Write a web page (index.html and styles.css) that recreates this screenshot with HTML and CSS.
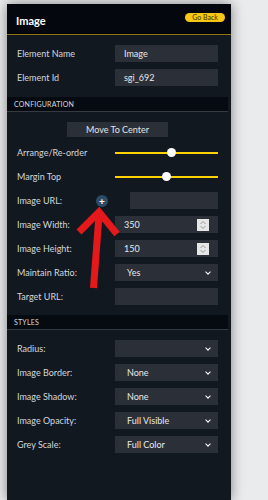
FILE: index.html
```html
<!DOCTYPE html>
<html>
<head>
    <title>Image settings</title>
    <link rel="stylesheet" href="styles.css">
</head>
<body>
    <div class="panel">
        <div class="panel-head">
            <h1>Image</h1>
            <button class="back-btn">Go Back</button>
        </div>
        <div class="panel-body">
            <div class="section">
                <div class="row">
                    <label>Element Name</label>
                    <input class="field" type="text" value="Image">
                </div>
                <div class="row">
                    <label>Element Id</label>
                    <input class="field" type="text" value="sgi_692">
                </div>
            </div>

            <div class="section-title">Configuration</div>
            <div class="section">
                <button class="center-btn">Move To Center</button>
                <div class="row">
                    <label>Arrange/Re-order</label>
                    <input class="slider" type="range" min="0" max="100" value="55">
                </div>
                <div class="row">
                    <label>Margin Top</label>
                    <input class="slider" type="range" min="0" max="100" value="50">
                </div>
                <div class="row">
                    <label>Image URL:</label>
                    <span class="add-btn">+</span>
                    <input class="field field-url" type="text" value="">
                </div>
                <div class="row">
                    <label>Image Width:</label>
                    <div class="field number">
                        <input type="text" value="350">
                        <span class="spin">
                            <svg width="8" height="10" viewBox="0 0 8 10"><path d="M1.5 4 L4 1.5 L6.5 4 M1.5 6 L4 8.5 L6.5 6" fill="none" stroke="#9a9a9a" stroke-width="1"/></svg>
                        </span>
                    </div>
                </div>
                <div class="row">
                    <label>Image Height:</label>
                    <div class="field number">
                        <input type="text" value="150">
                        <span class="spin">
                            <svg width="8" height="10" viewBox="0 0 8 10"><path d="M1.5 4 L4 1.5 L6.5 4 M1.5 6 L4 8.5 L6.5 6" fill="none" stroke="#9a9a9a" stroke-width="1"/></svg>
                        </span>
                    </div>
                </div>
                <div class="row">
                    <label>Maintain Ratio:</label>
                    <div class="field select"><span>Yes</span></div>
                </div>
                <div class="row">
                    <label>Target URL:</label>
                    <input class="field" type="text" value="">
                </div>
            </div>

            <div class="section-title">Styles</div>
            <div class="section">
                <div class="row">
                    <label>Radius:</label>
                    <div class="field select"><span></span></div>
                </div>
                <div class="row">
                    <label>Image Border:</label>
                    <div class="field select"><span>None</span></div>
                </div>
                <div class="row">
                    <label>Image Shadow:</label>
                    <div class="field select"><span>None</span></div>
                </div>
                <div class="row">
                    <label>Image Opacity:</label>
                    <div class="field select"><span>Full Visible</span></div>
                </div>
                <div class="row">
                    <label>Grey Scale:</label>
                    <div class="field select"><span>Full Color</span></div>
                </div>
            </div>
        </div>
    </div>

    <!-- red annotation arrow drawn over the panel -->
    <svg class="arrow" width="50" height="90" viewBox="0 0 50 90">
        <path d="M5 27 L25 7 L43 29" fill="none" stroke="#e5191c" stroke-width="7" stroke-linejoin="miter"/>
        <path d="M25 10 L19.5 83" fill="none" stroke="#e5191c" stroke-width="7"/>
    </svg>
</body>
</html>
```

FILE: styles.css
```css
body {
    background-color: #eaebed;
    font-family: Lato, "Open Sans", sans-serif;
    margin: 0;
    position: relative;
    height: 500px;
    overflow: hidden;
}

.panel {
    width: 224px;
    height: 496px;
    margin: 4px 0 0 7px;
    background-color: #121820;
    box-shadow: 0 0 12px rgba(0, 0, 0, 0.45);
}

.panel-head {
    height: 30px;
    display: flex;
    align-items: center;
    justify-content: space-between;
    padding: 0 6px 0 9px;
    background-color: #04070d;
    border-bottom: 1px solid #8f7215;
}

.panel-head h1 {
    margin: 0;
    color: #fff;
    font-size: 11px;
    font-weight: bold;
    position: relative;
    top: 1px;
}

.back-btn {
    height: 9px;
    width: 40px;
    padding: 0;
    border: none;
    border-radius: 5px;
    background-color: #f6c713;
    color: #3a3000;
    font-family: Lato, sans-serif;
    font-size: 7px;
    line-height: 9px;
    position: relative;
    top: -2px;
}

.panel-body {
    padding-right: 3px;
}

.section {
    display: flex;
    flex-direction: column;
    gap: 7px;
    padding: 10px 10px 11px 10px;
}

.section-title {
    height: 14px;
    line-height: 14px;
    padding-left: 7px;
    background-color: #060a11;
    border-bottom: 1px solid #363b42;
    color: #d6d9de;
    font-size: 7px;
    text-transform: uppercase;
    letter-spacing: 0.2px;
}

.section-title + .section {
    padding-bottom: 10px;
}

.section-title:last-of-type + .section {
    padding-top: 12px;
}

.row {
    display: flex;
    align-items: center;
    height: 17px;
}

.row label {
    flex: 1;
    color: #d3d7dc;
    font-size: 9px;
}

.field {
    box-sizing: border-box;
    width: 103px;
    height: 17px;
    margin: 0;
    border: none;
    background-color: #2b3038;
    color: #e8e8e8;
    font-family: Lato, sans-serif;
    font-size: 9px;
    padding: 0 9px;
    outline: none;
}

.field-url {
    width: 88px;
    margin-left: 22px;
}

.add-btn {
    width: 12px;
    height: 12px;
    border-radius: 50%;
    background-color: #2c4b66;
    color: #fff;
    font-size: 10px;
    font-weight: bold;
    line-height: 12px;
    text-align: center;
}

.number {
    display: flex;
    align-items: center;
}

.number input {
    flex: 1;
    width: 0;
    border: none;
    padding: 0;
    background: transparent;
    color: #e8e8e8;
    font-family: Lato, sans-serif;
    font-size: 9px;
    outline: none;
}

.spin {
    width: 12px;
    height: 12px;
    background-color: #e6e6e6;
    display: flex;
    align-items: center;
    justify-content: center;
}

.select {
    display: flex;
    align-items: center;
    justify-content: space-between;
    padding: 0 8px 0 12px;
    line-height: 17px;
}

.select::after {
    content: "";
    width: 3px;
    height: 3px;
    border-right: 1px solid #fff;
    border-bottom: 1px solid #fff;
    transform: rotate(45deg);
    margin-top: -2px;
}

.center-btn {
    align-self: center;
    width: 101px;
    height: 15px;
    padding: 0;
    border: none;
    background-color: #2b3038;
    color: #e4e4e4;
    font-family: Lato, sans-serif;
    font-size: 9px;
}

.slider {
    -webkit-appearance: none;
    appearance: none;
    width: 103px;
    height: 10px;
    margin: 0;
    background: transparent;
}

.slider::-webkit-slider-runnable-track {
    height: 2px;
    background-color: #ffd200;
}

.slider::-webkit-slider-thumb {
    -webkit-appearance: none;
    width: 9px;
    height: 9px;
    margin-top: -3.5px;
    border-radius: 50%;
    background-color: #fff;
    border: none;
}

.arrow {
    position: absolute;
    left: 74px;
    top: 205px;
}
```
